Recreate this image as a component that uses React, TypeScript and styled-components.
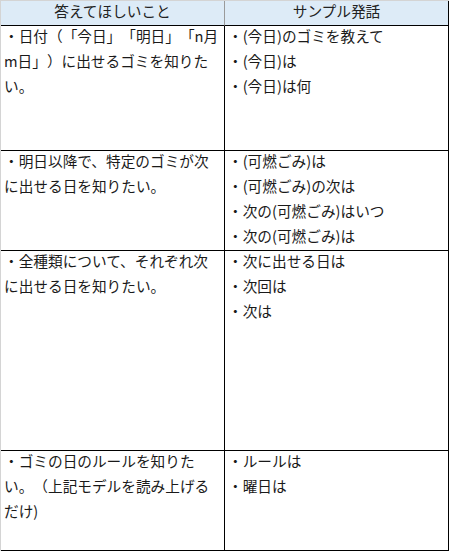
import React from "react";
import styled, { createGlobalStyle } from "styled-components";

const Global = createGlobalStyle`
  html, body { margin: 0; padding: 0; background: #ffffff; }
  body {
    font-family: "Noto Sans CJK JP", "Noto Sans", sans-serif;
    color: #111;
    text-spacing-trim: space-all;
  }
`;

const Page = styled.div`
  width: 449px;
  height: 551px;
  box-sizing: border-box;
  border-top: 1px solid #d4d4d4;
  border-left: 1px solid #d4d4d4;
  overflow: hidden;
`;

const Grid = styled.div`
  display: grid;
  grid-template-columns: 224px 224px;
  grid-template-rows: 25px 125px 100px 200px 100px;
`;

const HeadCell = styled.div<{ $last?: boolean }>`
  background: #ddebf7;
  border-bottom: 1px solid #000;
  border-right: 1px solid ${(p) => (p.$last ? "#000" : "#9a9a9a")};
  box-sizing: border-box;
  display: flex;
  align-items: center;
  justify-content: center;
  padding-bottom: 4px;
  font-size: 14.67px;
  line-height: 20px;
  color: #222;
`;

const Cell = styled.div`
  border-bottom: 1px solid #000;
  border-right: 1px solid #000;
  box-sizing: border-box;
  padding: 0 0 0 3px;
  font-size: 14.67px;
  line-height: 25px;
  white-space: nowrap;
  color: #1a1a1a;
`;

const Lines = styled.div`
  margin-top: -3px;
`;

const Line = styled.div``;

const rows: { ask: string[]; samples: string[] }[] = [
  {
    ask: ["・日付（「今日」「明日」「n月", "m日」）に出せるゴミを知りた", "い。"],
    samples: ["・(今日)のゴミを教えて", "・(今日)は", "・(今日)は何"],
  },
  {
    ask: ["・明日以降で、特定のゴミが次", "に出せる日を知りたい。"],
    samples: ["・(可燃ごみ)は", "・(可燃ごみ)の次は", "・次の(可燃ごみ)はいつ", "・次の(可燃ごみ)は"],
  },
  {
    ask: ["・全種類について、それぞれ次", "に出せる日を知りたい。"],
    samples: ["・次に出せる日は", "・次回は", "・次は"],
  },
  {
    ask: ["・ゴミの日のルールを知りた", "い。（上記モデルを読み上げる", "だけ)"],
    samples: ["・ルールは", "・曜日は"],
  },
];

export default function App() {
  return (
    <>
      <Global />
      <Page>
        <Grid>
          <HeadCell>答えてほしいこと</HeadCell>
          <HeadCell $last>サンプル発話</HeadCell>
          {rows.map((r, i) => (
            <React.Fragment key={i}>
              <Cell>
                <Lines>
                  {r.ask.map((t, j) => (
                    <Line key={j}>{t}</Line>
                  ))}
                </Lines>
              </Cell>
              <Cell>
                <Lines>
                  {r.samples.map((t, j) => (
                    <Line key={j}>{t}</Line>
                  ))}
                </Lines>
              </Cell>
            </React.Fragment>
          ))}
        </Grid>
      </Page>
    </>
  );
}
